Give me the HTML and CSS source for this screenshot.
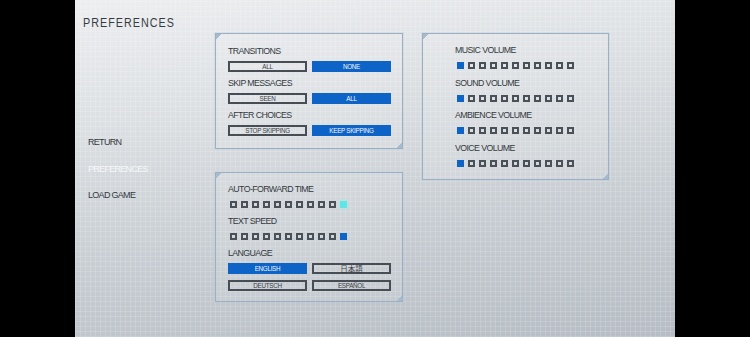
FILE: index.html
```html
<!DOCTYPE html>
<html lang="en">
<head>
    <meta charset="UTF-8">
    <title>Preferences</title>
    <link rel="stylesheet" href="styles.css">
</head>
<body>
    <div class="screen">
        <h1>PREFERENCES</h1>

        <div class="layout">
            <nav class="menu">
                <a href="#">RETURN</a>
                <a href="#" class="active">PREFERENCES</a>
                <a href="#">LOAD GAME</a>
            </nav>

            <div class="column">
                <!-- preskakovanie a prechody -->
                <section class="panel panel-skip">
                    <div class="field">
                        <div class="label">TRANSITIONS</div>
                        <div class="options">
                            <a href="#" class="opt">ALL</a>
                            <a href="#" class="opt on">NONE</a>
                        </div>
                    </div>
                    <div class="field">
                        <div class="label">SKIP MESSAGES</div>
                        <div class="options">
                            <a href="#" class="opt">SEEN</a>
                            <a href="#" class="opt on">ALL</a>
                        </div>
                    </div>
                    <div class="field">
                        <div class="label">AFTER CHOICES</div>
                        <div class="options">
                            <a href="#" class="opt">STOP SKIPPING</a>
                            <a href="#" class="opt on">KEEP SKIPPING</a>
                        </div>
                    </div>
                </section>

                <!-- text a jazyk -->
                <section class="panel panel-text">
                    <div class="field">
                        <div class="label label-slider">AUTO-FORWARD TIME</div>
                        <div class="bar">
                            <span class="sq"></span><span class="sq"></span><span class="sq"></span><span class="sq"></span><span class="sq"></span><span class="sq"></span><span class="sq"></span><span class="sq"></span><span class="sq"></span><span class="sq"></span><span class="sq glow"></span>
                        </div>
                    </div>
                    <div class="field">
                        <div class="label label-slider">TEXT SPEED</div>
                        <div class="bar">
                            <span class="sq"></span><span class="sq"></span><span class="sq"></span><span class="sq"></span><span class="sq"></span><span class="sq"></span><span class="sq"></span><span class="sq"></span><span class="sq"></span><span class="sq"></span><span class="sq on"></span>
                        </div>
                    </div>
                    <div class="field">
                        <div class="label">LANGUAGE</div>
                        <div class="options">
                            <a href="#" class="opt on">ENGLISH</a>
                            <a href="#" class="opt jp">日本語</a>
                        </div>
                        <div class="options options-next">
                            <a href="#" class="opt">DEUTSCH</a>
                            <a href="#" class="opt">ESPAÑOL</a>
                        </div>
                    </div>
                </section>
            </div>

            <!-- hlasitost -->
            <section class="panel panel-volume">
                <div class="field">
                    <div class="label label-slider">MUSIC VOLUME</div>
                    <div class="bar">
                        <span class="sq on"></span><span class="sq"></span><span class="sq"></span><span class="sq"></span><span class="sq"></span><span class="sq"></span><span class="sq"></span><span class="sq"></span><span class="sq"></span><span class="sq"></span><span class="sq"></span>
                    </div>
                </div>
                <div class="field">
                    <div class="label label-slider">SOUND VOLUME</div>
                    <div class="bar">
                        <span class="sq on"></span><span class="sq"></span><span class="sq"></span><span class="sq"></span><span class="sq"></span><span class="sq"></span><span class="sq"></span><span class="sq"></span><span class="sq"></span><span class="sq"></span><span class="sq"></span>
                    </div>
                </div>
                <div class="field">
                    <div class="label label-slider">AMBIENCE VOLUME</div>
                    <div class="bar">
                        <span class="sq on"></span><span class="sq"></span><span class="sq"></span><span class="sq"></span><span class="sq"></span><span class="sq"></span><span class="sq"></span><span class="sq"></span><span class="sq"></span><span class="sq"></span><span class="sq"></span>
                    </div>
                </div>
                <div class="field">
                    <div class="label label-slider">VOICE VOLUME</div>
                    <div class="bar">
                        <span class="sq on"></span><span class="sq"></span><span class="sq"></span><span class="sq"></span><span class="sq"></span><span class="sq"></span><span class="sq"></span><span class="sq"></span><span class="sq"></span><span class="sq"></span><span class="sq"></span>
                    </div>
                </div>
            </section>
        </div>
    </div>
</body>
</html>
```

FILE: styles.css
```css
body {
    margin: 0;
    padding: 0;
    background-color: #000;
    font-family: "Liberation Sans", Arial, sans-serif;
}
.screen {
    width: 600px;
    height: 337px;
    margin: 0 auto;
    padding: 16px 0 0 8px;
    box-sizing: border-box;
    overflow: hidden;
    background:
        repeating-linear-gradient(90deg, rgba(255,255,255,0.14) 0 1px, transparent 1px 5px),
        repeating-linear-gradient(0deg, rgba(255,255,255,0.14) 0 1px, transparent 1px 5px),
        linear-gradient(172deg, #eceef0 0%, #dde0e3 30%, #c7cdd2 65%, #b6bdc4 100%);
}
h1 {
    margin: 0 0 3px;
    font-size: 12.5px;
    line-height: 14px;
    letter-spacing: 1.2px;
    font-weight: normal;
    color: #363b41;
    transform: scaleX(0.86);
    transform-origin: left center;
}
.layout {
    display: flex;
    align-items: flex-start;
}
.menu {
    width: 127px;
    padding: 103px 0 0 5px;
    display: flex;
    flex-direction: column;
    gap: 14.5px;
}
.menu a {
    font-size: 9px;
    line-height: 12px;
    letter-spacing: -0.7px;
    color: #34393f;
    text-decoration: none;
}
.menu a.active {
    color: #f6f8fa;
}
.column {
    width: 188px;
    margin-right: 19px;
    display: flex;
    flex-direction: column;
    gap: 23px;
}
.panel {
    position: relative;
    box-sizing: border-box;
    border: 1px solid #9db0c3;
    box-shadow: 0 0 0 1px rgba(190,205,220,0.35);
    background-color: rgba(255,255,255,0.1);
    display: flex;
    flex-direction: column;
}
.panel::before,
.panel::after {
    content: "";
    position: absolute;
    width: 6px;
    height: 6px;
}
.panel::before {
    top: 0;
    left: 0;
    background: linear-gradient(135deg, #a7bbce 0 45%, transparent 45%);
}
.panel::after {
    right: 0;
    bottom: 0;
    background: linear-gradient(315deg, #a7bbce 0 45%, transparent 45%);
}
.panel-skip {
    width: 188px;
    padding: 12px 11px 12px 12px;
    gap: 6px;
}
.panel-text {
    width: 188px;
    padding: 11px 11px 10px 12px;
    gap: 8px;
}
.panel-volume {
    width: 187px;
    padding: 11px 11px 12px 32px;
    gap: 8.7px;
}
.field {
    display: flex;
    flex-direction: column;
}
.label {
    font-size: 8.8px;
    line-height: 10px;
    letter-spacing: -0.6px;
    color: #34393f;
    margin-bottom: 5px;
}
.label-slider {
    margin-bottom: 7px;
}
.options {
    display: flex;
    gap: 5px;
}
.options-next {
    margin-top: 6px;
}
.opt {
    width: 79px;
    height: 11px;
    box-sizing: border-box;
    border: 2px solid #474d54;
    display: flex;
    align-items: center;
    justify-content: center;
    font-size: 6.3px;
    letter-spacing: -0.3px;
    color: #3b4046;
    text-decoration: none;
}
.opt.on {
    background-color: #0e63c6;
    border-color: #0e63c6;
    color: #f2f6fb;
}
.opt.jp {
    font-family: "Noto Sans CJK JP", sans-serif;
    font-size: 7.5px;
    letter-spacing: 0;
}
.bar {
    display: flex;
    gap: 4px;
    margin-left: 2px;
}
.sq {
    width: 7px;
    height: 7px;
    box-sizing: border-box;
    border: 2px solid #4a5057;
}
.sq.on {
    background-color: #0e63c6;
    border-color: #0e63c6;
}
.sq.glow {
    background-color: #5ee6e6;
    border-color: #5ee6e6;
    box-shadow: 0 0 3px #8ff4f4;
}
```
